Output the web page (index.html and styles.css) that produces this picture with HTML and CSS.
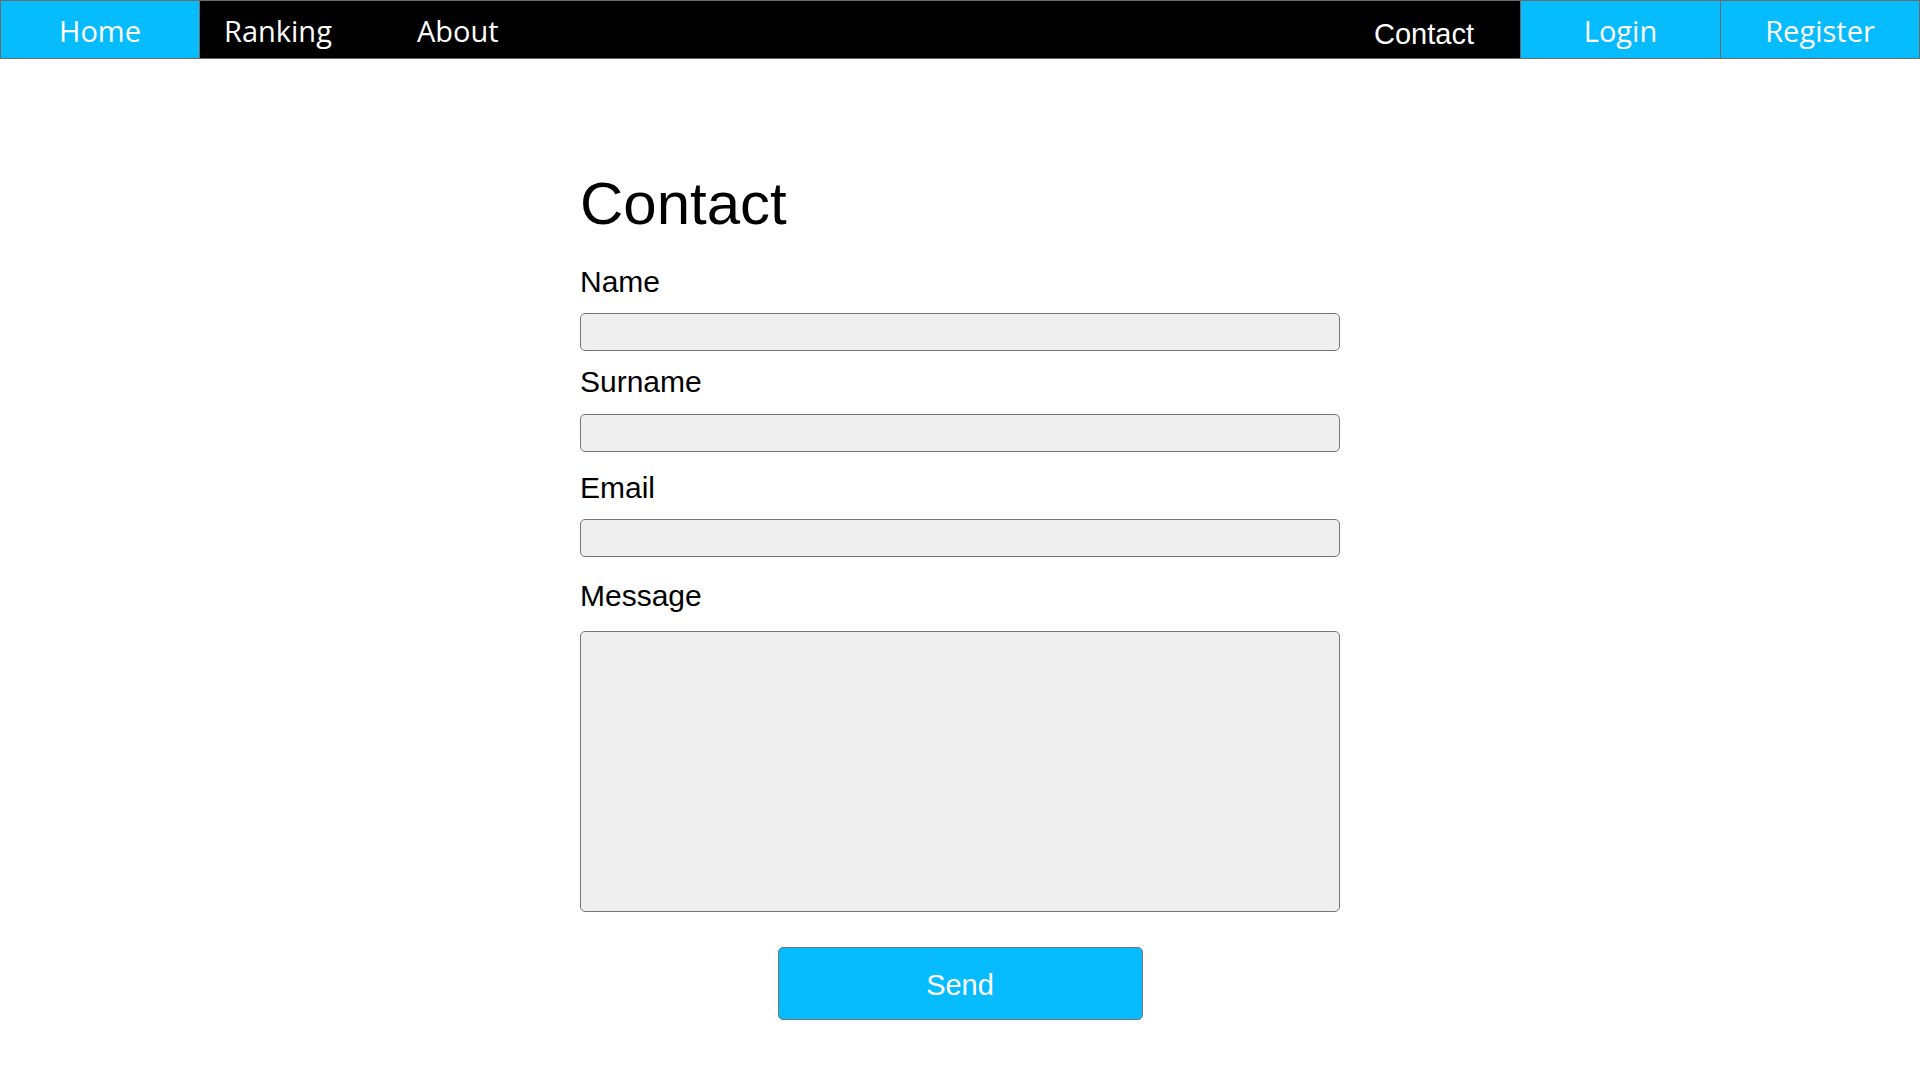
FILE: index.html
```html
<!DOCTYPE html>
<html lang="en">
<head>
<meta charset="utf-8">
<title>Contact</title>
<link rel="stylesheet" href="styles.css">
</head>
<body>
<nav class="topnav">
  <a class="nav-item nav-item--accent nav-item--home" href="#">Home</a>
  <a class="nav-item nav-item--left nav-item--ranking" href="#">Ranking</a>
  <a class="nav-item nav-item--left" href="#">About</a>
  <a class="nav-item nav-item--contact" href="#">Contact</a>
  <a class="nav-item nav-item--accent nav-item--login" href="#">Login</a>
  <a class="nav-item nav-item--accent nav-item--register" href="#">Register</a>
</nav>
<main class="page">
  <form class="contact-form">
    <h1 class="contact-title">Contact</h1>
    <div class="field field--name">
      <label class="field-label" for="name">Name</label>
      <input class="field-input" id="name" type="text">
    </div>
    <div class="field field--surname">
      <label class="field-label" for="surname">Surname</label>
      <input class="field-input" id="surname" type="text">
    </div>
    <div class="field field--email">
      <label class="field-label" for="email">Email</label>
      <input class="field-input" id="email" type="email">
    </div>
    <div class="field field--message">
      <label class="field-label" for="message">Message</label>
      <textarea class="field-input field-textarea" id="message"></textarea>
    </div>
    <button class="send-button" type="button">Send</button>
  </form>
</main>
</body>
</html>
```
FILE: styles.css
```css
html, body {
  margin: 0;
  padding: 0;
  background: #ffffff;
}

body {
  font-family: "Liberation Sans", Arial, sans-serif;
  color: #000;
}

.topnav {
  display: flex;
  height: 59px;
  box-sizing: border-box;
  border: 1px solid #6b6b6b;
  background: #000;
}

.nav-item {
  display: block;
  box-sizing: border-box;
  height: 57px;
  padding-top: 2px;
  line-height: 55px;
  font-family: "Open Sans", "Noto Sans", sans-serif;
  font-size: 29px;
  color: #fff;
  text-decoration: none;
  text-align: center;
  white-space: nowrap;
}

.nav-item--accent {
  background: #06bbfe;
}

.nav-item--home {
  width: 199px;
  border-right: 1px solid #6b6b6b;
}

.nav-item--left {
  text-align: left;
  padding-left: 24px;
}

.nav-item--ranking {
  width: 193px;
}

.nav-item--contact {
  margin-left: auto;
  padding-right: 46px;
  padding-top: 10px;
  line-height: 47px;
  font-family: "Liberation Sans", Arial, sans-serif;
}

.nav-item--login {
  width: 200px;
  border-left: 1px solid #6b6b6b;
}

.nav-item--register {
  width: 199px;
  border-left: 1px solid #6b6b6b;
}

.page {
  padding-top: 110px;
}

.contact-form {
  width: 760px;
  margin: 0 auto;
  display: flex;
  flex-direction: column;
}

.contact-title {
  margin: 0 0 26px 0;
  font-size: 60px;
  line-height: 70px;
  font-weight: normal;
}

.field {
  display: flex;
  flex-direction: column;
}

.field-label {
  display: block;
  font-size: 30px;
  line-height: 34px;
  margin-bottom: 14px;
}

.field--surname {
  margin-top: 14px;
}

.field--surname .field-label {
  margin-bottom: 15px;
}

.field--email {
  margin-top: 19px;
}

.field--message {
  margin-top: 22px;
}

.field--message .field-label {
  margin-bottom: 18px;
}

.field-input {
  display: block;
  width: 100%;
  height: 38px;
  box-sizing: border-box;
  margin: 0;
  border: 1px solid #767676;
  border-radius: 5px;
  background: #efefef;
  font-family: "Liberation Sans", Arial, sans-serif;
  font-size: 20px;
}

.field-textarea {
  height: 281px;
  resize: none;
}

.send-button {
  display: block;
  width: 365px;
  height: 73px;
  margin: 35px auto 0 auto;
  box-sizing: border-box;
  border: 1px solid #767676;
  border-radius: 5px;
  background: #06bbfe;
  color: #fff;
  font-family: "Liberation Sans", Arial, sans-serif;
  font-size: 29px;
  padding: 4px 0 0 0;
}
```
